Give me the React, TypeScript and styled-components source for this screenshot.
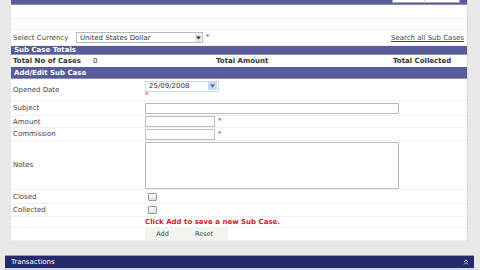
import React from 'react';
import styled, { createGlobalStyle } from 'styled-components';

const Global = createGlobalStyle`
  html, body {
    margin: 0;
    padding: 0;
    background: #e8e8e8;
    font-family: "DejaVu Sans", Verdana, sans-serif;
    font-size: 7px;
    color: #333;
    overflow: hidden;
  }
`;

const Page = styled.div`
  width: 480px;
  height: 270px;
  display: flex;
  flex-direction: column;
`;

const Panel = styled.div`
  margin-left: 11px;
  width: 456px;
  background: #fff;
  border-right: 1px solid #d8d8d8;
  display: flex;
  flex-direction: column;
`;

const SectionBar = styled.div<{ $h?: number }>`
  height: ${p => p.$h ?? 12}px;
  flex-shrink: 0;
  background: #585c99;
  color: #fff;
  font-weight: bold;
  font-size: 7px;
  display: flex;
  align-items: center;
  justify-content: space-between;
  padding: 0 3px;
  border-bottom: 1px solid #8d90bb;
  box-sizing: border-box;
  overflow: hidden;
`;

const TopButton = styled.div`
  align-self: flex-end;
  width: 68px;
  height: 8px;
  line-height: 6px;
  background: #fff;
  border: 1px solid #aaa;
  border-top: none;
  color: #777;
  font-weight: normal;
  text-align: center;
  font-size: 6px;
  margin-right: 4px;
  box-sizing: border-box;
  margin-bottom: 1px;
`;

const Row = styled.div<{ $h: number }>`
  height: ${p => p.$h}px;
  flex-shrink: 0;
  display: grid;
  grid-template-columns: 132px 1fr;
  align-items: center;
  border-bottom: 1px solid #f0f0f0;
  padding-left: 2px;
  box-sizing: border-box;
`;

const Label = styled.div`
  color: #444;
`;

const Field = styled.div`
  display: flex;
  align-items: center;
  gap: 3px;
`;

const DateField = styled.div`
  display: flex;
  flex-direction: column;
  align-items: flex-start;
`;

const Star = styled.span`
  color: #d23;
  font-size: 7px;
  line-height: 7px;
`;

const CurrencyRow = styled.div`
  height: 16px;
  flex-shrink: 0;
  display: flex;
  align-items: center;
  padding: 0 2px;
  border-bottom: 1px solid #f0f0f0;
  box-sizing: border-box;
`;

const CurrencyLabel = styled(Label)`
  width: 63px;
`;

const Select = styled.div<{ $w: number; $blue?: boolean }>`
  width: ${p => p.$w}px;
  height: 11px;
  border: 1px solid ${p => (p.$blue ? '#cfd6e6' : '#b8b8b8')};
  background: #fff;
  display: flex;
  align-items: center;
  justify-content: space-between;
  padding-left: 3px;
  box-sizing: border-box;
  color: #333;
`;

const Arrow = styled.span<{ $blue?: boolean }>`
  width: ${p => (p.$blue ? 9 : 6)}px;
  height: 8px;
  margin-right: 1px;
  background: ${p => (p.$blue ? '#c9d8f2' : '#e4e4e4')};
  border-radius: 1px;
  display: flex;
  align-items: center;
  justify-content: center;
`;

const SearchLink = styled.a`
  margin-left: auto;
  color: #3b3f6e;
  text-decoration: underline;
  margin-right: 1px;
`;

const TotalsRow = styled.div`
  height: 12px;
  flex-shrink: 0;
  display: grid;
  grid-template-columns: 80px 123px 177px 1fr;
  align-items: center;
  padding: 0 2px;
  box-sizing: border-box;
  font-weight: bold;
  color: #333;
`;

const Count = styled.span`
  font-weight: normal;
`;

const Input = styled.div<{ $w: number; $h?: number }>`
  width: ${p => p.$w}px;
  height: ${p => p.$h ?? 11}px;
  border: 1px solid #bdbdbd;
  background: #fff;
  box-sizing: border-box;
`;

const Check = styled.span`
  width: 7px;
  height: 6px;
  margin-left: 3px;
  border: 1px solid #999;
  border-radius: 1px;
  background: linear-gradient(#fff, #ddd);
`;

const Message = styled.div`
  color: #d0202e;
  font-weight: bold;
`;

const Buttons = styled.div`
  display: flex;
`;

const Button = styled.div<{ $w: number }>`
  width: ${p => p.$w}px;
  height: 12px;
  background: #f3f3ef;
  color: #444;
  display: flex;
  align-items: center;
  justify-content: center;
  font-size: 6.5px;
`;

const Gap = styled.div`
  height: 14px;
  flex-shrink: 0;
  background: #e8e8e8;
`;

const Transactions = styled.div`
  margin-left: 5px;
  width: 469px;
  height: 13px;
  flex-shrink: 0;
  background: #262a6c;
  color: #fff;
  display: flex;
  align-items: center;
  justify-content: space-between;
  padding: 0 5px 0 6px;
  box-sizing: border-box;
  border-top: 1px solid #9a9cc0;
`;

const SubRow = styled.div`
  margin-left: 5px;
  width: 469px;
  height: 4px;
  background: #cfdcec;
`;

const Blank = styled.div<{ $h: number }>`
  height: ${p => p.$h}px;
  flex-shrink: 0;
  border-bottom: 1px solid #f0f0f0;
  box-sizing: border-box;
`;

const Caret = ({ blue }: { blue?: boolean }) => (
  <Arrow $blue={blue}>
    <svg width="5" height="4" viewBox="0 0 5 4">
      <path d="M0 0.5 L5 0.5 L2.5 3.5 Z" fill={blue ? '#3d5fa8' : '#333'} />
    </svg>
  </Arrow>
);

export default function App() {
  return (
    <Page>
      <Global />
      <Panel>
        <SectionBar $h={5}>
          <span />
          <TopButton>Import</TopButton>
        </SectionBar>
        <Blank $h={14} />
        <Blank $h={11} />
        <CurrencyRow>
          <CurrencyLabel>Select Currency</CurrencyLabel>
          <Select $w={127}>
            United States Dollar
            <Caret />
          </Select>
          <Star style={{ marginLeft: 3 }}>*</Star>
          <SearchLink>Search all Sub Cases</SearchLink>
        </CurrencyRow>
        <SectionBar $h={9}>Sub Case Totals</SectionBar>
        <TotalsRow>
          <span>Total No of Cases</span>
          <Count>0</Count>
          <span>Total Amount</span>
          <span>Total Collected</span>
        </TotalsRow>
        <SectionBar $h={12}>Add/Edit Sub Case</SectionBar>
        <Row $h={22}>
          <Label>Opened Date</Label>
          <DateField>
            <Select $w={74} $blue>
              25/09/2008
              <Caret blue />
            </Select>
            <Star>*</Star>
          </DateField>
        </Row>
        <Row $h={15}>
          <Label>Subject</Label>
          <Field>
            <Input $w={254} />
          </Field>
        </Row>
        <Row $h={12}>
          <Label>Amount</Label>
          <Field>
            <Input $w={70} />
            <Star>*</Star>
          </Field>
        </Row>
        <Row $h={13}>
          <Label>Commission</Label>
          <Field>
            <Input $w={70} />
            <Star>*</Star>
          </Field>
        </Row>
        <Row $h={49}>
          <Label>Notes</Label>
          <Field>
            <Input $w={254} $h={47} />
          </Field>
        </Row>
        <Row $h={14}>
          <Label>Closed</Label>
          <Field>
            <Check />
          </Field>
        </Row>
        <Row $h={13}>
          <Label>Collected</Label>
          <Field>
            <Check />
          </Field>
        </Row>
        <Row $h={11}>
          <span />
          <Message>Click Add to save a new Sub Case.</Message>
        </Row>
        <Row $h={13}>
          <span />
          <Buttons>
            <Button $w={35}>Add</Button>
            <Button $w={48}>Reset</Button>
          </Buttons>
        </Row>
      </Panel>
      <Gap />
      <Transactions>
        <span>Transactions</span>
        <svg width="6" height="6" viewBox="0 0 6 6">
          <path d="M1 3 L3 1 L5 3 M1 5.5 L3 3.5 L5 5.5" stroke="#ccd" strokeWidth="1" fill="none" />
        </svg>
      </Transactions>
      <SubRow />
    </Page>
  );
}
